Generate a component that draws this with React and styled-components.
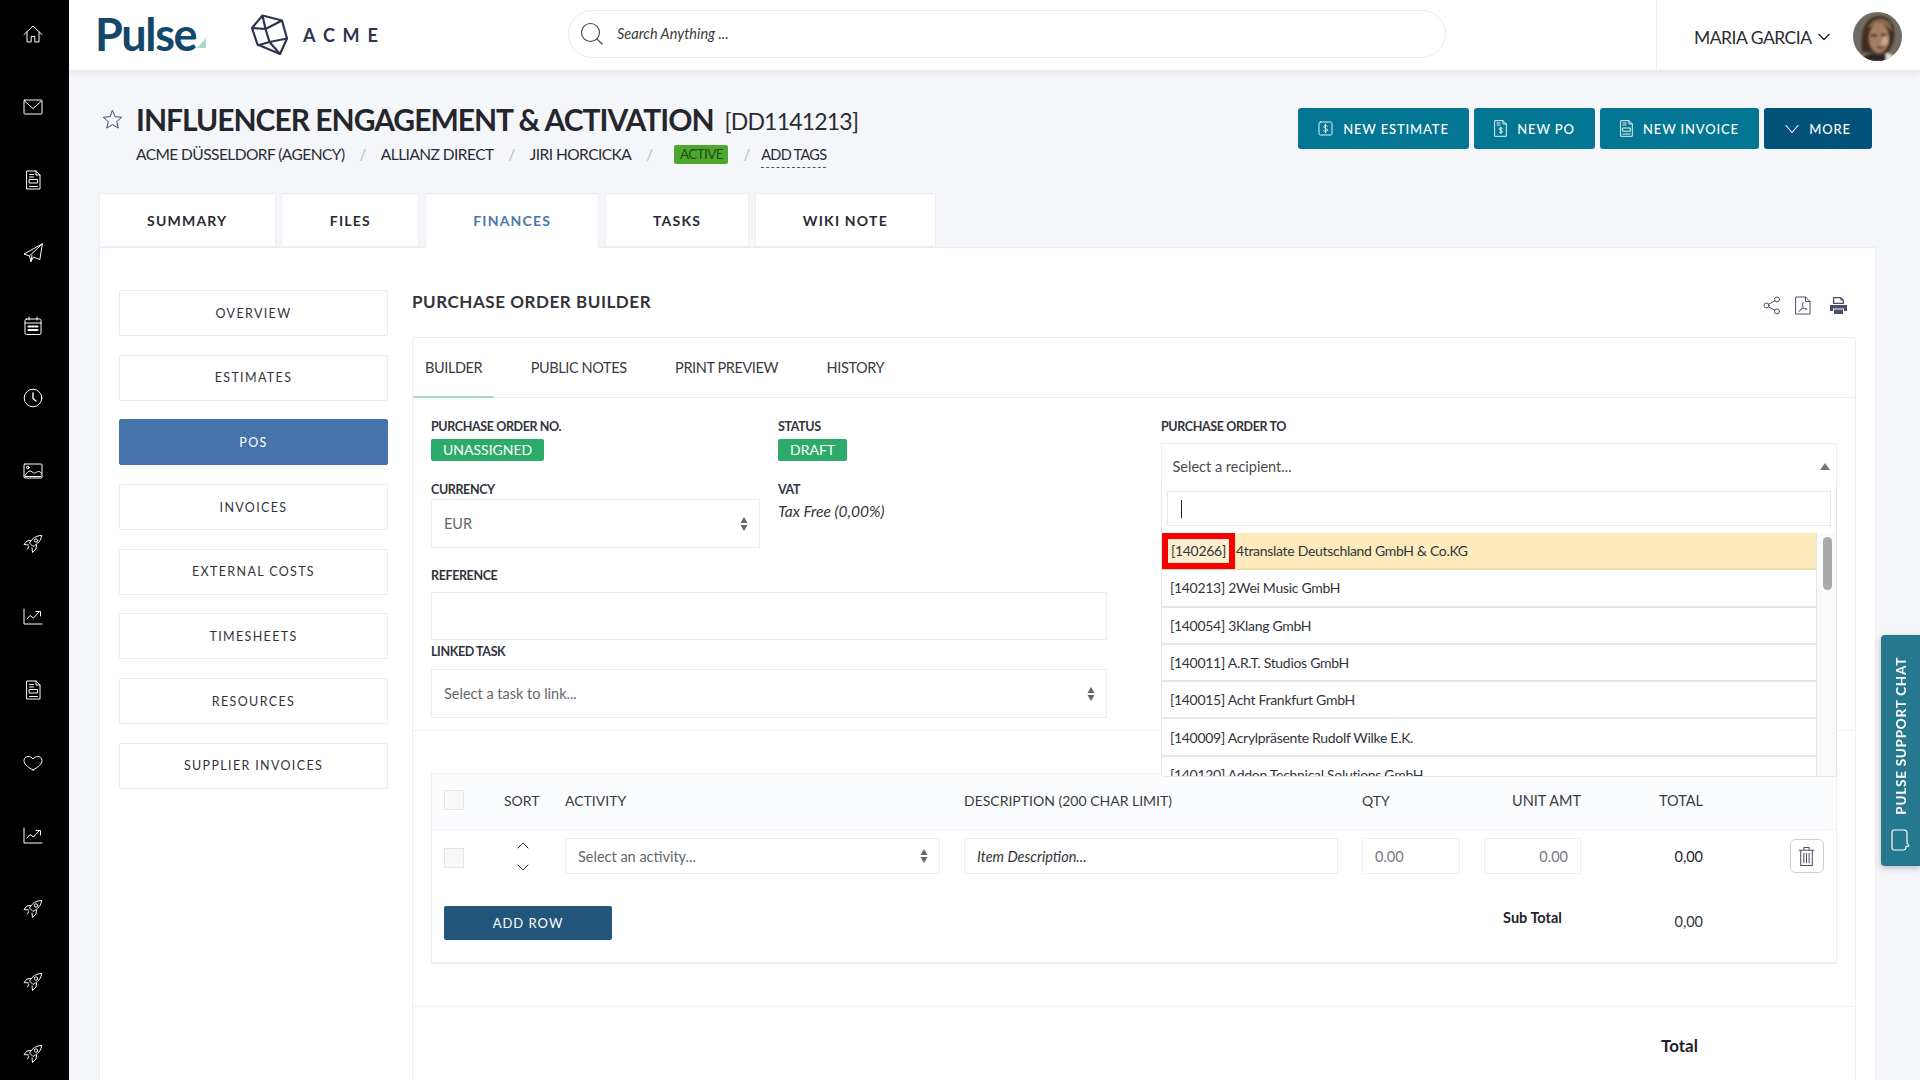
import styled, { createGlobalStyle } from "styled-components";

const GlobalStyle = createGlobalStyle`
  html, body {
    margin: 0;
    height: 100%;
    overflow: hidden;
    background: #f4f6fa;
    color: #2b2c33;
    font-family: "Lato", "Liberation Sans", sans-serif;
  }
  * { box-sizing: border-box; }
`;

const Line = ({ size = 20, w, h, vb = "0 0 20 20", sw = 1, children, color = "currentColor" }) => (
  <svg width={w || size} height={h || size} viewBox={vb} fill="none" stroke={color} strokeWidth={sw} strokeLinecap="round" strokeLinejoin="round">
    {children}
  </svg>
);

const HomeIcon = () => <Line><path d="M1 10.500 10 2l9 8.500M4 8v10h4.200v-5.500h3.600V18H16V8" /></Line>;
const MailIcon = () => <Line><rect x="1" y="3" width="18" height="14" rx=".8" /><path d="m1.500 4 8.500 7.500L18.500 4" /></Line>;
const FormIcon = () => (
  <Line>
    <path d="M4 1h9l4 4v14H4zM13 1v4h4M6.500 4.500h4M6.500 7h4M6.500 16.500h8" />
    <rect x="6.500" y="9.500" width="8" height="3.500" />
  </Line>
);
const PlaneIcon = () => <Line><path d="M19 1 1 11l5.500 2 1.500 5.500 2.500-4.500 6 2.500zM19 1 6.500 13M8 18.500l1-6" /></Line>;
const CalendarIcon = () => (
  <Line>
    <rect x="2" y="3" width="16" height="15.500" rx="1.500" />
    <path d="M6 1v3M14 1v3M2 7h16" />
    <path strokeWidth="2" d="M5.500 10.500h2M9 10.500h2M12.500 10.500h2M5.500 14h2M9 14h2M12.500 14h2" />
  </Line>
);
const ClockIcon = () => <Line><circle cx="10" cy="10" r="8.800" /><path strokeWidth="1.400" d="M10 5v5.500l3 2.500" /></Line>;
const ImageIcon = () => (
  <Line>
    <rect x="1" y="3" width="18" height="14" rx="1" />
    <circle cx="4.800" cy="6.500" r="1.300" />
    <path d="M2 14.500c2-3 3.500-4.500 5-4.500s3 2 4.500 2 2.500-1.500 4-1.500 2.500 1 3 2M2 15.500h16" />
  </Line>
);
const RocketIcon = () => (
  <Line>
    <path d="M18.500 1.500c-5-.2-9.500 3-12 7.500l3.500 3.500c4.500-2.500 8.500-6 8.500-11z" />
    <circle cx="13" cy="6.500" r="1.700" />
    <path d="M8 6.500 4 7 1 10.500l4.500.5M13.500 11l-.5 4-3.500 3.500-.5-4.500M5.800 12.500 4.500 15" />
  </Line>
);
const ChartIcon = () => <Line><path d="M1 2v15h18M4 12l3-3.500 3.500 2.500L16 5M13 4.500h4.500V9" /></Line>;
const HeartIcon = () => <Line><path d="M10 17C4 13.500 1 11 1 7.500 1 5 3 3.500 5 3.500c2 0 4 1 5 2.500 1-1.500 3-2.500 5-2.500 2 0 4 1.500 4 4 0 3.500-3 6-9 9.500z" /></Line>;

const railIcons = [
  HomeIcon, MailIcon, FormIcon, PlaneIcon, CalendarIcon, ClockIcon, ImageIcon, RocketIcon,
  ChartIcon, FormIcon, HeartIcon, ChartIcon, RocketIcon, RocketIcon, RocketIcon,
];

const tabs = ["SUMMARY", "FILES", "FINANCES", "TASKS", "WIKI NOTE"];
const tabWidths = { SUMMARY: 176.5, FILES: 138, FINANCES: 174, TASKS: 144, "WIKI NOTE": 181 };
const sideLinks = ["OVERVIEW", "ESTIMATES", "POS", "INVOICES", "EXTERNAL COSTS", "TIMESHEETS", "RESOURCES", "SUPPLIER INVOICES"];
const subTabs = ["BUILDER", "PUBLIC NOTES", "PRINT PREVIEW", "HISTORY"];
const recipients = [
  ["[140213]", "2Wei Music GmbH"],
  ["[140054]", "3Klang GmbH"],
  ["[140011]", "A.R.T. Studios GmbH"],
  ["[140015]", "Acht Frankfurt GmbH"],
  ["[140009]", "Acrylpräsente Rudolf Wilke E.K."],
  ["[140120]", "Addon Technical Solutions GmbH"],
];

const SortArrows = () => (
  <svg width="8" height="14" viewBox="0 0 8 14" fill="#666">
    <path d="M4 0 7.500 6H.5zM4 14 .5 8h7z" />
  </svg>
);

export default function App() {
  return (
    <>
      <GlobalStyle />
      <Page>
        <Rail>
          {railIcons.map((Icon, i) => (
            <RailItem key={i}>
              <Icon />
            </RailItem>
          ))}
        </Rail>
        <Main>
          <TopBar>
            <Logos>
              <PulseLogo>
                Pulse
                <svg width="9" height="10" viewBox="0 0 9 10">
                  <path d="M9 0v10H0z" fill="#a6d9cb" />
                </svg>
              </PulseLogo>
              <AcmeLogo>
                <svg width="37" height="42" viewBox="0 0 37 42" fill="none" stroke="#2f3350" strokeWidth="2.200" strokeLinejoin="round">
                  <path d="m11.500 1.500 19.500 5 5 18-7 15.500-22.500-9.500L1 14z" />
                  <path d="m11.500 1.500 3 13.500L1 14M14.500 15 31 6.500M14.500 15l4 13-12 3.500M18.500 28 36 24.500M18.500 28 29 40" />
                </svg>
                <AcmeText>ACME</AcmeText>
              </AcmeLogo>
            </Logos>
            <SearchBox>
              <svg width="24" height="24" viewBox="0 0 24 24" fill="none" stroke="#444" strokeWidth="1.100">
                <circle cx="10.500" cy="10.500" r="9" />
                <path d="m17 17 5.500 5.500" />
              </svg>
              <span>Search Anything ...</span>
            </SearchBox>
            <UserArea>
              <UserName>
                MARIA GARCIA
                <Line w={12} h={8} vb="0 0 12 8" sw={1.500}>
                  <path d="m1 1.500 5 5 5-5" />
                </Line>
              </UserName>
              <Avatar viewBox="0 0 49 49">
                <defs>
                  <clipPath id="av">
                    <circle cx="24.500" cy="24.500" r="24.500" />
                  </clipPath>
                  <filter id="soft">
                    <feGaussianBlur stdDeviation="0.900" />
                  </filter>
                </defs>
                <g clipPath="url(#av)">
                  <rect width="49" height="49" fill="#716c63" />
                  <g filter="url(#soft)">
                    <path d="M9 40C7 24 10 4 26 4c13 0 17 12 15 24-2 6-4 10-7 14z" fill="#3f2e24" />
                    <path d="M15 16c3-7 8-9 13-9 7 0 11 5 11 13-3-5-7-8-12-8-5 1-9 2-12 4z" fill="#8a6a50" />
                    <ellipse cx="26" cy="26" rx="10" ry="15" fill="#a67d63" />
                    <path d="M31 24c3 0 5 2 4 8l-6 3c-1-4-1-8 2-11z" fill="#c9a684" />
                    <path d="M18 23.500h6M28 23h5" stroke="#2b1c14" strokeWidth="1.800" />
                    <path d="M24 35c2 1.200 5 1 7-.5" stroke="#5a2e28" strokeWidth="1.600" fill="none" />
                    <path d="M8 49c3-6 9-8 16-7 8 0 14 2 17 7z" fill="#2b2420" />
                    <path d="M33 41l7 2 1 6-8 0z" fill="#e2e0da" />
                  </g>
                </g>
              </Avatar>
            </UserArea>
          </TopBar>

          <Content>
            <PageHead>
              <div>
                <TitleRow>
                  <Line size={21} vb="0 0 20 20" sw={0.900} color="#3c4260">
                    <path d="m10 1.500 2.500 5.800 6.300.6-4.800 4.100 1.500 6.200L10 14.900l-5.500 3.300L6 12 1.200 7.900l6.300-.6z" />
                  </Line>
                  <Title>INFLUENCER ENGAGEMENT &amp; ACTIVATION</Title>
                  <ProjectCode>[DD1141213]</ProjectCode>
                </TitleRow>
                <Crumbs>
                  <span>ACME DÜSSELDORF (AGENCY)</span>
                  <Slash>/</Slash>
                  <span>ALLIANZ DIRECT</span>
                  <Slash>/</Slash>
                  <span>JIRI HORCICKA</span>
                  <Slash>/</Slash>
                  <ActiveBadge>ACTIVE</ActiveBadge>
                  <Slash>/</Slash>
                  <AddTags>ADD TAGS</AddTags>
                </Crumbs>
              </div>
              <HeadActions>
                <ActionButton $w={171}>
                  <Line w={15} h={15} vb="0 0 15 15" sw={0.900}>
                    <rect x="1" y="1" width="13" height="13" rx="1.500" />
                    <path d="M9.500 5.200c-.4-.9-3.800-1.200-3.800.6 0 1.700 3.800 1.400 3.800 3.300 0 1.800-3.500 1.500-4 .6M7.500 3v9" />
                  </Line>
                  NEW ESTIMATE
                </ActionButton>
                <ActionButton $w={121}>
                  <Line w={13} h={17} vb="0 0 13 17" sw={0.900}>
                    <path d="M1 .7h8L12.300 4v12.300H1zM9 .7V4h3.300M3 3h3M3 5h3" />
                    <path d="M8.500 8.500c-.4-.7-3.300-.9-3.300.4s3.300 1.200 3.300 2.800c0 1.300-2.900 1.100-3.300.3M6.900 7v6.500" />
                  </Line>
                  NEW PO
                </ActionButton>
                <ActionButton $w={159}>
                  <Line w={13} h={17} vb="0 0 13 17" sw={0.900}>
                    <path d="M1 .7h8L12.300 4v12.300H1zM9 .7V4h3.300M3 3h3M3 5h3M3 14h7" />
                    <rect x="3" y="8" width="7.300" height="3.200" />
                  </Line>
                  NEW INVOICE
                </ActionButton>
                <ActionButton $w={108} $dark>
                  <Line w={14} h={10} vb="0 0 14 10" sw={1.100}>
                    <path d="m1 1.500 6 7 6-7" />
                  </Line>
                  MORE
                </ActionButton>
              </HeadActions>
            </PageHead>

            <TabRow>
              {tabs.map((t) => (
                <MainTab key={t} $w={tabWidths[t]} $active={t === "FINANCES"}>
                  {t}
                </MainTab>
              ))}
            </TabRow>

            <Panel>
              <SideNav>
                {sideLinks.map((l) => (
                  <SideLink key={l} $active={l === "POS"}>
                    {l}
                  </SideLink>
                ))}
              </SideNav>

              <Builder>
                <BuilderHead>
                  <BuilderTitle>PURCHASE ORDER BUILDER</BuilderTitle>
                  <ToolIcons>
                    <Line w={18} h={19} vb="0 0 18 19" sw={1} color="#4a5068">
                      <circle cx="14" cy="3.500" r="2.500" />
                      <circle cx="3.500" cy="9.500" r="2.500" />
                      <circle cx="14" cy="15.500" r="2.500" />
                      <path d="m5.700 8.300 6.200-3.600M5.700 10.700l6.200 3.600" />
                    </Line>
                    <Line w={16} h={19} vb="0 0 16 19" sw={1} color="#4a5068">
                      <path d="M1 1h9.500L15 5.500V18H1zM10.500 1v4.500H15" />
                      <path d="M8 6.500c-1 0-.5 3 .5 5s2.800 2.500 3.500 2-1-1.500-4-1-4.500 2.500-4 3 2-1 3-3.500.5-5.500 1-5.500z" strokeWidth=".7" />
                    </Line>
                    <svg width="19" height="19" viewBox="0 0 19 19" fill="#4a5068">
                      <path d="M4 1h8l3 3v4H4zM5.300 2.300v4.500h8.400V4.600h-2.300V2.300zM1 9h17a1 1 0 0 1 0 .5V15h-3v-2.500H4V15H1V9.500A.5.5 0 0 1 1 9zM5 13.500h9V18H5z" fillRule="evenodd" />
                    </svg>
                  </ToolIcons>
                </BuilderHead>

                <Card>
                  <SubTabs>
                    {subTabs.map((t) => (
                      <SubTab key={t} $active={t === "BUILDER"}>
                        {t}
                      </SubTab>
                    ))}
                  </SubTabs>

                  <FormArea>
                    <FormLeft>
                      <FieldPair>
                        <div>
                          <FieldLabel>PURCHASE ORDER NO.</FieldLabel>
                          <Pill>UNASSIGNED</Pill>
                        </div>
                        <div>
                          <FieldLabel>STATUS</FieldLabel>
                          <Pill>DRAFT</Pill>
                        </div>
                      </FieldPair>
                      <FieldPair $top={20}>
                        <div>
                          <FieldLabel>CURRENCY</FieldLabel>
                          <SelectBox $h={49} $gap={2}>
                            EUR
                            <SortArrows />
                          </SelectBox>
                        </div>
                        <div>
                          <FieldLabel>VAT</FieldLabel>
                          <TaxNote>Tax Free (0,00%)</TaxNote>
                        </div>
                      </FieldPair>
                      <FieldLabel $top={19}>REFERENCE</FieldLabel>
                      <TextBox $gap={9} />
                      <FieldLabel $top={3}>LINKED TASK</FieldLabel>
                      <SelectBox $h={49} $gap={10}>
                        Select a task to link...
                        <SortArrows />
                      </SelectBox>
                    </FormLeft>

                    <FormRight>
                      <FieldLabel>PURCHASE ORDER TO</FieldLabel>
                      <RecipientSelect>
                        <RecipientHead>
                          Select a recipient...
                          <svg width="10" height="7" viewBox="0 0 10 7" fill="#777">
                            <path d="M5 0 10 7H0z" />
                          </svg>
                        </RecipientHead>
                        <RecipientDrop>
                          <RecipientSearch>
                            <Caret />
                          </RecipientSearch>
                          <RecipientBody>
                            <RecipientList>
                              <RecipientRow $active>
                                <Marked>[140266]</Marked>
                                4translate Deutschland GmbH &amp; Co.KG
                              </RecipientRow>
                              {recipients.map(([code, name]) => (
                                <RecipientRow key={code}>
                                  {code} {name}
                                </RecipientRow>
                              ))}
                            </RecipientList>
                            <ScrollTrack>
                              <ScrollThumb />
                            </ScrollTrack>
                          </RecipientBody>
                        </RecipientDrop>
                      </RecipientSelect>
                    </FormRight>
                  </FormArea>

                  <LinesTable>
                    <HeadRow>
                      <CheckBox />
                      <span>SORT</span>
                      <span>ACTIVITY</span>
                      <span>DESCRIPTION (200 CHAR LIMIT)</span>
                      <span>QTY</span>
                      <RightCell>UNIT AMT</RightCell>
                      <RightCell>TOTAL</RightCell>
                    </HeadRow>
                    <ItemRow>
                      <RowCheck />
                      <SortButtons>
                        <Line w={12} h={7} vb="0 0 12 7" color="#333">
                          <path d="m1 6 5-5 5 5" />
                        </Line>
                        <Line w={12} h={7} vb="0 0 12 7" color="#333">
                          <path d="m1 1 5 5 5-5" />
                        </Line>
                      </SortButtons>
                      <SelectBox $h={36}>
                        Select an activity...
                        <SortArrows />
                      </SelectBox>
                      <TextBox $h={36} $italic>Item Description...</TextBox>
                      <TextBox $h={36} $muted>0.00</TextBox>
                      <TextBox $h={36} $muted $right>0.00</TextBox>
                      <RightCell $strong>0,00</RightCell>
                      <TrashCell>
                        <TrashButton>
                          <Line w={17} h={21} vb="0 0 16 20" color="#4a5068">
                            <path d="M1 4h14M5.500 4V1.500h5V4M2.500 4v14.500h11V4M5.500 7v9M8 7v9M10.500 7v9" />
                          </Line>
                        </TrashButton>
                      </TrashCell>
                    </ItemRow>
                    <FootRow>
                      <AddRow>ADD ROW</AddRow>
                      <SubTotal>Sub Total</SubTotal>
                      <SubValue>0,00</SubValue>
                    </FootRow>
                  </LinesTable>

                  <GrandRow>
                    <GrandLabel>Total</GrandLabel>
                  </GrandRow>
                </Card>
              </Builder>
            </Panel>
          </Content>
        </Main>
        <ChatTab>
          <ChatText>PULSE SUPPORT CHAT</ChatText>
          <Line w={20} h={22} vb="0 0 20 22" color="#fff" sw={1.200}>
            <path d="M3 1h10a3 3 0 0 1 3 3v10l2 3-3 .5V18a3 3 0 0 1-3 3H3a2 2 0 0 1-2-2V3a2 2 0 0 1 2-2z" />
          </Line>
        </ChatTab>
      </Page>
    </>
  );
}

const Page = styled.div`
  display: flex;
  height: 100vh;
  overflow: hidden;
`;

const Rail = styled.nav`
  flex: 0 0 69px;
  background: #000;
  color: #fff;
  display: flex;
  flex-direction: column;
  gap: 4.900px;
`;

const RailItem = styled.div`
  flex: 0 0 68px;
  display: flex;
  align-items: center;
  justify-content: center;
  padding-right: 3px;
`;

const Main = styled.div`
  flex: 1;
  min-width: 0;
  display: flex;
  flex-direction: column;
`;

const TopBar = styled.header`
  flex: 0 0 70px;
  display: flex;
  align-items: center;
  background: #fff;
  box-shadow: 0 2px 8px rgba(30, 40, 70, 0.1);
  position: relative;
`;

const Logos = styled.div`
  flex: 0 0 499px;
  display: flex;
  align-items: center;
  padding-left: 26px;
`;

const PulseLogo = styled.div`
  display: flex;
  align-items: flex-end;
  width: 156px;
  margin-top: -3px;
  font-size: 45px;
  font-weight: 700;
  letter-spacing: -1.400px;
  line-height: 46px;
  color: #14486b;

  svg {
    margin: 0 0 9px 1px;
  }
`;

const AcmeLogo = styled.div`
  display: flex;
  align-items: center;
  gap: 15px;
`;

const AcmeText = styled.span`
  font-size: 18px;
  font-weight: 700;
  letter-spacing: 7.800px;
  color: #2f3350;
`;

const SearchBox = styled.div`
  flex: 0 0 878px;
  height: 48px;
  margin-top: -3px;
  border: 1px solid #eaeaea;
  border-radius: 24px;
  display: flex;
  align-items: center;
  gap: 13px;
  padding-left: 11px;
  font-size: 14.500px;
  font-style: italic;
  color: #3a3a3a;
`;

const UserArea = styled.div`
  margin-left: auto;
  width: 264px;
  height: 100%;
  border-left: 1px solid #eee;
  display: flex;
  align-items: center;
  justify-content: space-between;
  padding: 0 18px 0 37px;
`;

const UserName = styled.div`
  display: flex;
  align-items: center;
  gap: 6px;
  font-size: 17.500px;
  letter-spacing: -0.500px;
  margin-top: 4px;
  color: #2b2c33;
`;

const Avatar = styled.svg`
  width: 49px;
  height: 49px;
  margin-top: 3px;
`;

const Content = styled.main`
  flex: 1;
  min-height: 0;
  padding: 0 44.500px 0 30px;
  display: flex;
  flex-direction: column;
`;

const PageHead = styled.div`
  display: flex;
  justify-content: space-between;
  align-items: flex-start;
  height: 123px;
  padding-top: 37px;
`;

const TitleRow = styled.div`
  display: flex;
  align-items: center;
  height: 24px;
  padding-left: 3px;
`;

const Title = styled.h1`
  margin: 0 0 0 13px;
  font-size: 30px;
  font-weight: 700;
  letter-spacing: -1px;
  white-space: nowrap;
  color: #25262d;
`;

const ProjectCode = styled.span`
  margin: 3px 0 0 11px;
  font-size: 23px;
  letter-spacing: -0.800px;
  color: #2b2c33;
`;

const Crumbs = styled.div`
  display: flex;
  align-items: center;
  margin: 13px 0 0 37px;
  height: 20px;
  font-size: 15.500px;
  letter-spacing: -0.550px;
  color: #2b2c33;
`;

const Slash = styled.span`
  margin: 0 15px;
  color: #b5b8c0;
  font-size: 15px;
`;

const ActiveBadge = styled.span`
  height: 19px;
  line-height: 19px;
  background: #4ea82e;
  color: #1d4d14;
  font-size: 13.500px;
  letter-spacing: -0.600px;
  padding: 0 5.500px;
  border-radius: 2px;
  margin-left: 7px;
`;

const AddTags = styled.span`
  font-size: 14.500px;
  letter-spacing: -0.700px;
  border-bottom: 1px dashed #555;
  padding: 5px 0 4px;
  margin-left: -3.500px;
`;

const HeadActions = styled.div`
  display: flex;
  gap: 5px;
  margin: 1px 3.500px 0 0;
`;

const ActionButton = styled.button`
  width: ${(p) => p.$w}px;
  height: 41px;
  border: 0;
  border-radius: 3px;
  background: ${(p) => (p.$dark ? "#02527a" : "#027693")};
  color: #fff;
  font-family: inherit;
  font-size: 13px;
  font-weight: 500;
  letter-spacing: 0.850px;
  display: flex;
  align-items: center;
  justify-content: center;
  gap: 10px;
`;

const TabRow = styled.div`
  display: flex;
  gap: 5.850px;
  height: 54px;
  position: relative;
  z-index: 1;
`;

const MainTab = styled.div`
  width: ${(p) => p.$w}px;
  height: ${(p) => (p.$active ? "55px" : "54px")};
  padding-bottom: ${(p) => (p.$active ? "1px" : "0")};
  display: flex;
  align-items: center;
  justify-content: center;
  background: #fff;
  border: 1px solid #e9edf3;
  border-bottom: ${(p) => (p.$active ? "0" : "1px solid #e9edf3")};
  font-size: 14px;
  font-weight: 700;
  letter-spacing: 1.200px;
  color: ${(p) => (p.$active ? "#4a78ad" : "#2b2c33")};
`;

const Panel = styled.section`
  flex: 1;
  min-height: 0;
  display: flex;
  gap: 24px;
  padding: 42px 19px 0 19px;
  background: #fff;
  border: 1px solid #e9edf3;
  border-bottom: 0;
`;

const SideNav = styled.div`
  flex: 0 0 269px;
  display: flex;
  flex-direction: column;
  gap: 18.700px;
`;

const SideLink = styled.a`
  height: 46px;
  display: flex;
  align-items: center;
  justify-content: center;
  background: ${(p) => (p.$active ? "#4673aa" : "#fff")};
  border: 1px solid ${(p) => (p.$active ? "#4673aa" : "#ececec")};
  border-radius: 2px;
  color: ${(p) => (p.$active ? "#fff" : "#33343b")};
  font-size: 12.500px;
  letter-spacing: 1.350px;
`;

const Builder = styled.div`
  flex: 1;
  min-width: 0;
`;

const BuilderHead = styled.div`
  display: flex;
  justify-content: space-between;
  align-items: flex-start;
  height: 47px;
`;

const BuilderTitle = styled.h2`
  margin: 0;
  font-size: 17px;
  font-weight: 700;
  letter-spacing: 0.550px;
  line-height: 24px;
  color: #33343b;
`;

const ToolIcons = styled.div`
  display: flex;
  gap: 14px;
  margin: 6px 7.500px 0 0;

  svg:last-child {
    margin-left: 4px;
  }
`;

const Card = styled.div`
  border: 1px solid #eceef1;
  border-bottom: 0;
  border-radius: 4px 4px 0 0;
  height: 800px;
`;

const SubTabs = styled.div`
  display: flex;
  height: 60px;
  border-bottom: 1px solid #eeeeee;
`;

const SubTab = styled.div`
  height: 60px;
  display: flex;
  align-items: center;
  padding: 0 12px;
  margin-right: 24.500px;
  font-size: 14.500px;
  letter-spacing: -0.400px;
  color: #3a3b42;
  border-bottom: 2px solid ${(p) => (p.$active ? "#a8dcc0" : "transparent")};
`;

const FormArea = styled.div`
  display: flex;
  gap: 54px;
  height: 333px;
  padding: 20px 18px 0;
  border-bottom: 1px solid #f0f0f0;
`;

const FormLeft = styled.div`
  flex: 0 0 676px;
`;

const FormRight = styled.div`
  flex: 1;
  position: relative;
`;

const FieldPair = styled.div`
  display: grid;
  grid-template-columns: 329px 1fr;
  column-gap: 18px;
  margin-top: ${(p) => p.$top || 0}px;
`;

const FieldLabel = styled.div`
  height: 16px;
  line-height: 18px;
  margin-top: ${(p) => p.$top || 0}px;
  font-size: 12.500px;
  font-weight: 700;
  letter-spacing: -0.380px;
  color: #33343b;
`;

const Pill = styled.div`
  width: fit-content;
  margin-top: 5px;
  height: 22px;
  line-height: 22px;
  min-width: 68px;
  padding: 0 12px;
  border-radius: 2px;
  background: #2dab6b;
  color: #fff;
  font-size: 14px;
`;

const SelectBox = styled.div`
  height: ${(p) => p.$h}px;
  margin-top: ${(p) => p.$gap || 0}px;
  padding: 0 11px 0 12px;
  display: flex;
  align-items: center;
  justify-content: space-between;
  background: #fff;
  border: 1px solid #eceef1;
  font-size: 14.500px;
  color: #65666c;
`;

const TaxNote = styled.div`
  margin-top: 2px;
  font-size: 15.500px;
  font-style: italic;
  line-height: 24px;
  color: #33343b;
`;

const TextBox = styled.div`
  height: ${(p) => p.$h || 48}px;
  margin-top: ${(p) => p.$gap || 0}px;
  padding: 0 12px;
  display: flex;
  align-items: center;
  justify-content: ${(p) => (p.$right ? "flex-end" : "flex-start")};
  background: #fff;
  border: 1px solid #eceef1;
  font-size: 14.500px;
  font-style: ${(p) => (p.$italic ? "italic" : "normal")};
  color: ${(p) => (p.$muted ? "#77787e" : "#33343b")};
`;

const RecipientSelect = styled.div`
  position: relative;
  margin-top: 9px;
`;

const RecipientHead = styled.div`
  height: 44px;
  padding: 2px 6px 0 10.500px;
  display: flex;
  align-items: center;
  justify-content: space-between;
  border: 1px solid #eceef1;
  border-bottom: 0;
  font-size: 14.500px;
  color: #4a4b52;
`;

const RecipientDrop = styled.div`
  position: absolute;
  top: 100%;
  left: 0;
  right: 0;
  height: 290px;
  z-index: 5;
  display: flex;
  flex-direction: column;
  background: #fff;
  border: 1px solid #e6e6e6;
  border-top: 0;
  border-radius: 0 0 4px 4px;
  overflow: hidden;
`;

const RecipientSearch = styled.div`
  flex: 0 0 35px;
  margin: 4px 5px 7px;
  border: 1px solid #e6e8ec;
  display: flex;
  align-items: center;
  padding-left: 13px;
`;

const Caret = styled.span`
  width: 1px;
  height: 18px;
  background: #222;
`;

const RecipientBody = styled.div`
  flex: 1;
  min-height: 0;
  display: flex;
`;

const RecipientList = styled.div`
  flex: 1;
  min-width: 0;
  overflow: hidden;
`;

const RecipientRow = styled.div`
  height: 37.300px;
  display: flex;
  align-items: center;
  gap: 1px;
  padding-left: ${(p) => (p.$active ? "0" : "8px")};
  background: ${(p) => (p.$active ? "#feebbd" : "#fff")};
  border-bottom: 2px solid ${(p) => (p.$active ? "#f0dcae" : "#e6e6e6")};
  font-size: 14px;
  letter-spacing: -0.300px;
  white-space: pre;
  color: #33343b;
`;

const Marked = styled.span`
  height: 36px;
  display: flex;
  align-items: center;
  padding: 0 3px;
  border: 6px solid #f60000;
  background: #fdf0d0;
`;

const ScrollTrack = styled.div`
  flex: 0 0 20px;
  padding: 4px 4px 0 6px;
  background: #fafafa;
  border-left: 1px solid #e6e6e6;
`;

const ScrollThumb = styled.div`
  height: 53px;
  border-radius: 5px;
  background: #a9a9a9;
`;

const LinesTable = styled.div`
  height: 191px;
  margin: 42px 18px;
  border: 1px solid #eceef1;
  border-bottom-width: 2px;
  padding: 0 12px;
  position: relative;
  &::before {
    content: "";
    position: absolute;
    inset: 0 0 auto 0;
    height: 55px;
    background: #fbfcfd;
    border-bottom: 1px solid #f1f3f6;
  }
`;

const tableColumns = "36px 37px 375px 374px 98px 97px 98px 1fr";

const HeadRow = styled.div`
  position: relative;
  display: grid;
  grid-template-columns: ${tableColumns};
  column-gap: 24px;
  align-items: center;
  height: 55px;
  padding-bottom: 3px;
  font-size: 14px;
  color: #3a3b42;
  white-space: nowrap;
`;

const CheckBox = styled.span`
  width: 20px;
  height: 20px;
  background: #f8f8f8;
  border: 1px solid #e6e6e6;
`;

const RowCheck = styled(CheckBox)`
  margin-top: 3px;
`;

const RightCell = styled.span`
  text-align: right;
  color: ${(p) => (p.$strong ? "#22232a" : "inherit")};
  font-size: 14.500px;
`;

const ItemRow = styled.div`
  position: relative;
  display: grid;
  grid-template-columns: ${tableColumns};
  column-gap: 24px;
  align-items: center;
  margin-top: 9px;
  height: 36px;
`;

const SortButtons = styled.div`
  display: flex;
  flex-direction: column;
  align-items: center;
  gap: 15px;
  color: #333;
`;

const TrashCell = styled.div`
  display: flex;
  justify-content: flex-end;
`;

const TrashButton = styled.div`
  width: 34px;
  height: 34px;
  display: flex;
  align-items: center;
  justify-content: center;
  border: 1px solid #ccd0d6;
  border-radius: 5px;
`;

const FootRow = styled.div`
  display: grid;
  grid-template-columns: ${tableColumns};
  column-gap: 24px;
  margin-top: 32px;
`;

const AddRow = styled.button`
  grid-column: 1 / 4;
  width: 168px;
  height: 34px;
  border: 0;
  border-radius: 2px;
  background: #23557a;
  color: #fff;
  font-family: inherit;
  font-size: 13px;
  letter-spacing: 1px;
`;

const SubTotal = styled.strong`
  grid-column: 6;
  text-align: center;
  font-size: 14.500px;
  line-height: 24px;
  color: #22232a;
`;

const SubValue = styled.span`
  grid-column: 7;
  text-align: right;
  font-size: 14.500px;
  line-height: 24px;
  padding-top: 4px;
  color: #33343b;
`;

const GrandRow = styled.div`
  border-top: 1px solid #f0f0f0;
  height: 100px;
  padding: 28px 0 0 1248px;
`;

const GrandLabel = styled.strong`
  font-size: 17px;
  line-height: 22px;
  color: #22232a;
`;

const ChatTab = styled.aside`
  position: fixed;
  top: 635px;
  right: 0;
  width: 39px;
  height: 231px;
  border-radius: 4px 0 0 4px;
  background: #26788f;
  box-shadow: 0 2px 6px rgba(0, 0, 0, 0.25);
  color: #fff;
  display: flex;
  flex-direction: column;
  align-items: center;
  padding-top: 22px;
  gap: 14px;
  z-index: 9;
`;

const ChatText = styled.span`
  writing-mode: vertical-rl;
  transform: rotate(180deg);
  font-size: 13.500px;
  font-weight: 700;
  letter-spacing: 0.750px;
  white-space: nowrap;
`;
